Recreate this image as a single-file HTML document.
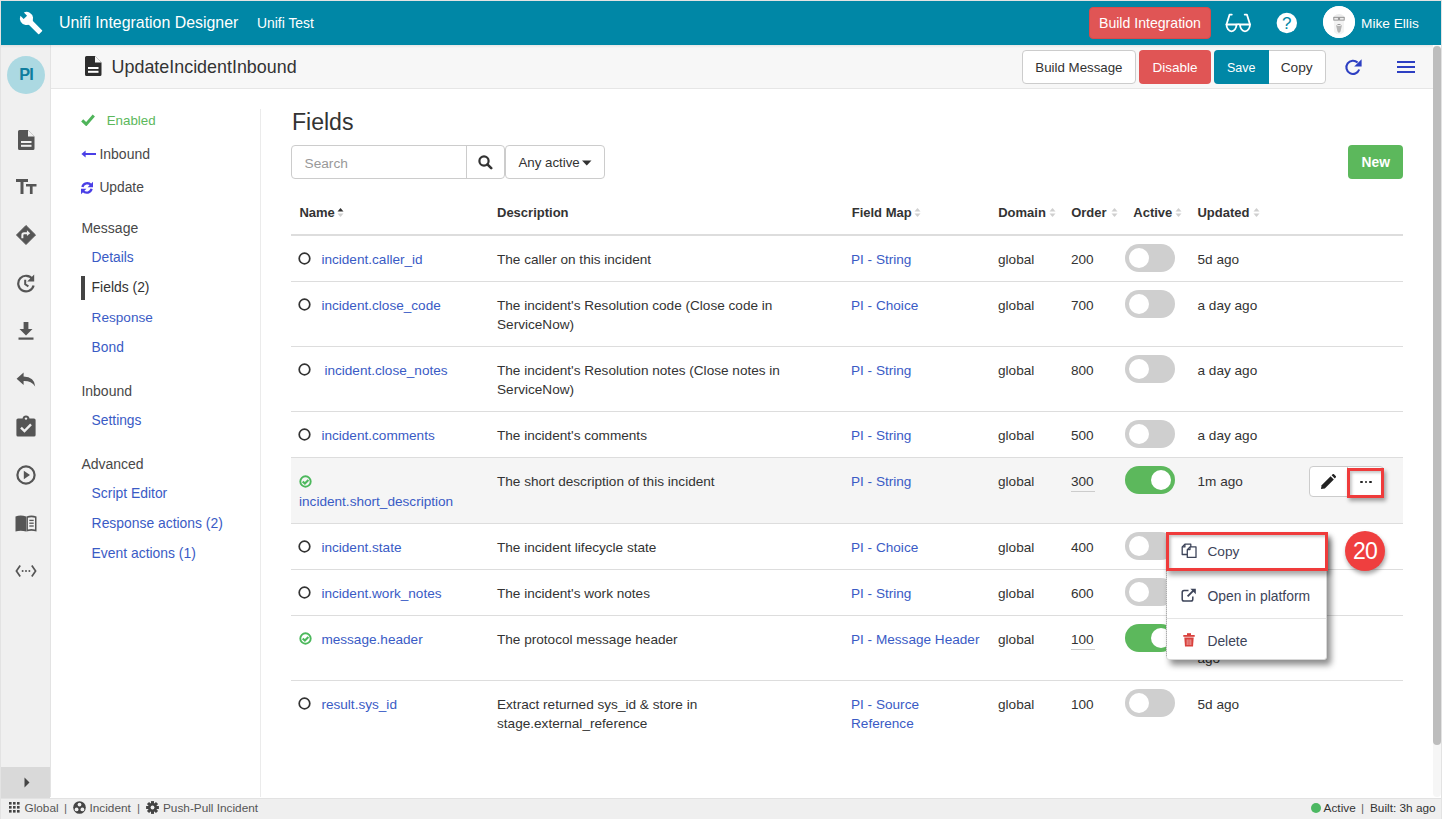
<!DOCTYPE html><html><head><meta charset="utf-8"><style>
*{box-sizing:border-box;margin:0;padding:0}
html,body{width:1442px;height:819px;overflow:hidden;background:#fff}
body{font-family:"Liberation Sans",sans-serif;color:#333;position:relative}
.abs{position:absolute}
.t{position:absolute;white-space:nowrap;line-height:1}
</style></head><body><div class="abs" style="left:0px;top:0px;width:1442px;height:45px;background:#0087a6"></div>
<div class="abs" style="left:0px;top:45px;width:51px;height:752px;background:#f0f0f0;border-right:1px solid #e3e3e3"></div>
<div class="abs" style="left:51px;top:45px;width:1382px;height:44px;background:#f7f7f7;border-bottom:1px solid #e6e6e6"></div>
<div class="abs" style="left:1px;top:45px;width:1432px;height:3px;background:linear-gradient(rgba(0,0,0,.07),rgba(0,0,0,0))"></div>
<div class="abs" style="left:260px;top:109px;width:1px;height:688px;background:#ebebeb"></div>
<div class="abs" style="left:0px;top:798px;width:1442px;height:21px;background:#efefef;border-top:1px solid #e2e2e2"></div>
<div class="abs" style="left:1px;top:767px;width:49px;height:31px;background:#d9d9d9"></div>
<div class="abs" style="left:1433px;top:45px;width:8px;height:752px;background:#f6f6f6;border-radius:4px"></div>
<div class="abs" style="left:1433px;top:46px;width:8px;height:699px;background:#bdbdbd;border-radius:4px"></div>
<div class="t " style="left:59px;top:15px;font-size:15.9px;color:#fff;font-weight:400;">Unifi Integration Designer</div>
<div class="t " style="left:257px;top:17px;font-size:13.9px;color:#fff;font-weight:400;">Unifi Test</div>
<div class="abs" style="left:1089px;top:7px;width:122px;height:32px;background:#e05555;border:1px solid #d84a4a;border-radius:4px"></div>
<div class="t " style="left:1099px;top:16px;font-size:14.1px;color:#fff;font-weight:400;">Build Integration</div>
<div class="t " style="left:1361px;top:17px;font-size:13.7px;color:#fff;font-weight:400;">Mike Ellis</div>
<div class="abs" style="left:1323px;top:6px;width:32px;height:32px;background:#fff;border-radius:50%"></div>
<div class="t " style="left:111.6px;top:59px;font-size:17.9px;color:#333;font-weight:400;">UpdateIncidentInbound</div>
<div class="abs" style="left:1022px;top:50px;width:114px;height:34px;background:#fff;border:1px solid #ccc;border-radius:4px"></div>
<div class="t " style="left:1035.3px;top:61px;font-size:13.3px;color:#333;font-weight:400;">Build Message</div>
<div class="abs" style="left:1139px;top:50px;width:72px;height:34px;background:#e05555;border-radius:4px"></div>
<div class="t " style="left:1152.5px;top:61px;font-size:13.5px;color:#fff;font-weight:400;">Disable</div>
<div class="abs" style="left:1214px;top:50px;width:112px;height:34px;background:#fff;border:1px solid #ccc;border-radius:4px"></div>
<div class="abs" style="left:1214px;top:50px;width:55px;height:34px;background:#0087a6;border-radius:4px 0 0 4px"></div>
<div class="t " style="left:1227px;top:62px;font-size:12.5px;color:#fff;font-weight:400;">Save</div>
<div class="t " style="left:1280.7px;top:61px;font-size:13.7px;color:#333;font-weight:400;">Copy</div>
<div class="abs" style="left:7px;top:56px;width:38px;height:38px;background:#acd9e2;border-radius:50%"></div>
<div class="t " style="left:19.2px;top:66px;font-size:16.3px;color:#0f7d9e;font-weight:700;letter-spacing:-0.9px">PI</div>
<div class="t " style="left:106.7px;top:114px;font-size:13.35px;color:#5cb85c;font-weight:400;">Enabled</div>
<div class="t " style="left:99.4px;top:147px;font-size:14px;color:#484848;font-weight:400;">Inbound</div>
<div class="t " style="left:99.4px;top:181px;font-size:13.8px;color:#484848;font-weight:400;">Update</div>
<div class="t " style="left:81.4px;top:221px;font-size:14px;color:#484848;font-weight:400;">Message</div>
<div class="t " style="left:91.6px;top:251px;font-size:13.8px;color:#3a5bc5;font-weight:400;">Details</div>
<div class="abs" style="left:81px;top:276px;width:4px;height:24px;background:#444"></div>
<div class="t " style="left:91.6px;top:281px;font-size:13.9px;color:#333;font-weight:400;">Fields (2)</div>
<div class="t " style="left:91.6px;top:311px;font-size:13.6px;color:#3a5bc5;font-weight:400;">Response</div>
<div class="t " style="left:91.6px;top:341px;font-size:13.8px;color:#3a5bc5;font-weight:400;">Bond</div>
<div class="t " style="left:81.4px;top:384px;font-size:14px;color:#484848;font-weight:400;">Inbound</div>
<div class="t " style="left:91.6px;top:414px;font-size:13.8px;color:#3a5bc5;font-weight:400;">Settings</div>
<div class="t " style="left:81.4px;top:457px;font-size:14px;color:#484848;font-weight:400;">Advanced</div>
<div class="t " style="left:91.6px;top:487px;font-size:13.9px;color:#3a5bc5;font-weight:400;">Script Editor</div>
<div class="t " style="left:91.6px;top:517px;font-size:13.9px;color:#3a5bc5;font-weight:400;">Response actions (2)</div>
<div class="t " style="left:91.6px;top:547px;font-size:13.9px;color:#3a5bc5;font-weight:400;">Event actions (1)</div>
<div class="t " style="left:291.9px;top:111px;font-size:23.1px;color:#333;font-weight:400;">Fields</div>
<div class="abs" style="left:291px;top:145px;width:214px;height:34px;background:#fff;border:1px solid #ccc;border-radius:4px"></div>
<div class="abs" style="left:466px;top:145px;width:1px;height:34px;background:#ccc"></div>
<div class="t " style="left:304.5px;top:157px;font-size:13.7px;color:#999;font-weight:400;">Search</div>
<div class="abs" style="left:505px;top:145px;width:100px;height:34px;background:#fff;border:1px solid #ccc;border-radius:4px"></div>
<div class="t " style="left:518.4px;top:156px;font-size:13.3px;color:#333;font-weight:400;">Any active</div>
<div class="abs" style="left:1348px;top:145px;width:55px;height:34px;background:#5cb85c;border-radius:4px"></div>
<div class="t " style="left:1361.5px;top:156px;font-size:13.8px;color:#fff;font-weight:700;">New</div>
<div class="t " style="left:299.4px;top:206px;font-size:13px;color:#333;font-weight:700;">Name</div>
<div class="t " style="left:497px;top:206px;font-size:13px;color:#333;font-weight:700;">Description</div>
<div class="t " style="left:851.7px;top:206px;font-size:13px;color:#333;font-weight:700;">Field Map</div>
<div class="t " style="left:998.2px;top:206px;font-size:13px;color:#333;font-weight:700;">Domain</div>
<div class="t " style="left:1071.2px;top:206px;font-size:13px;color:#333;font-weight:700;">Order</div>
<div class="t " style="left:1133.3px;top:206px;font-size:13px;color:#333;font-weight:700;">Active</div>
<div class="t " style="left:1197.4px;top:206px;font-size:13px;color:#333;font-weight:700;">Updated</div>
<svg class="abs" style="left:337px;top:207px;" width="7" height="11" viewBox="0 0 7 11"><path d="M0.5 4.5 L3.5 1 L6.5 4.5Z" fill="#333"/><path d="M0.5 6.5 L3.5 10 L6.5 6.5Z" fill="#cfcfcf"/></svg>
<svg class="abs" style="left:914px;top:207px;" width="7" height="11" viewBox="0 0 7 11"><path d="M0.5 4.5 L3.5 1 L6.5 4.5Z" fill="#cfcfcf"/><path d="M0.5 6.5 L3.5 10 L6.5 6.5Z" fill="#cfcfcf"/></svg>
<svg class="abs" style="left:1049px;top:207px;" width="7" height="11" viewBox="0 0 7 11"><path d="M0.5 4.5 L3.5 1 L6.5 4.5Z" fill="#cfcfcf"/><path d="M0.5 6.5 L3.5 10 L6.5 6.5Z" fill="#cfcfcf"/></svg>
<svg class="abs" style="left:1111px;top:207px;" width="7" height="11" viewBox="0 0 7 11"><path d="M0.5 4.5 L3.5 1 L6.5 4.5Z" fill="#cfcfcf"/><path d="M0.5 6.5 L3.5 10 L6.5 6.5Z" fill="#cfcfcf"/></svg>
<svg class="abs" style="left:1175px;top:207px;" width="7" height="11" viewBox="0 0 7 11"><path d="M0.5 4.5 L3.5 1 L6.5 4.5Z" fill="#cfcfcf"/><path d="M0.5 6.5 L3.5 10 L6.5 6.5Z" fill="#cfcfcf"/></svg>
<svg class="abs" style="left:1253px;top:207px;" width="7" height="11" viewBox="0 0 7 11"><path d="M0.5 4.5 L3.5 1 L6.5 4.5Z" fill="#cfcfcf"/><path d="M0.5 6.5 L3.5 10 L6.5 6.5Z" fill="#cfcfcf"/></svg>
<div class="abs" style="left:291px;top:234px;width:1112px;height:2px;background:#ddd"></div>
<div class="abs" style="left:291px;top:281px;width:1112px;height:1px;background:#ddd"></div>
<div class="abs" style="left:291px;top:346px;width:1112px;height:1px;background:#ddd"></div>
<div class="abs" style="left:291px;top:411px;width:1112px;height:1px;background:#ddd"></div>
<div class="abs" style="left:291px;top:457px;width:1112px;height:1px;background:#ddd"></div>
<div class="abs" style="left:291px;top:523px;width:1112px;height:1px;background:#ddd"></div>
<div class="abs" style="left:291px;top:569px;width:1112px;height:1px;background:#ddd"></div>
<div class="abs" style="left:291px;top:615px;width:1112px;height:1px;background:#ddd"></div>
<div class="abs" style="left:291px;top:680px;width:1112px;height:1px;background:#ddd"></div>
<div class="abs" style="left:291px;top:458px;width:1112px;height:65px;background:#f5f5f5"></div>
<svg class="abs" style="left:298px;top:251.5px;" width="13" height="13" viewBox="0 0 13 13"><circle cx="6.5" cy="6.5" r="5.3" fill="none" stroke="#333" stroke-width="1.7"/></svg>
<div class="t " style="left:321.4px;top:253px;font-size:13.6px;color:#3a5bc5;font-weight:400;">incident.caller_id</div>
<div class="t " style="left:497px;top:253px;font-size:13.6px;color:#333;font-weight:400;">The caller on this incident</div>
<div class="t " style="left:851px;top:253px;font-size:13.6px;color:#3a5bc5;font-weight:400;">PI - String</div>
<div class="t " style="left:998px;top:253px;font-size:13.6px;color:#333;font-weight:400;">global</div>
<div class="t " style="left:1071px;top:253px;font-size:13.6px;color:#333;font-weight:400;">200</div>
<div class="abs" style="left:1125px;top:244px;width:50px;height:28px;background:#cfcfcf;border-radius:14px"></div>
<div class="abs" style="left:1129px;top:248px;width:20px;height:20px;background:#fff;border-radius:50%"></div>
<div class="t " style="left:1197.5px;top:253px;font-size:13.6px;color:#333;font-weight:400;">5d ago</div>
<svg class="abs" style="left:298px;top:297.5px;" width="13" height="13" viewBox="0 0 13 13"><circle cx="6.5" cy="6.5" r="5.3" fill="none" stroke="#333" stroke-width="1.7"/></svg>
<div class="t " style="left:321.4px;top:299px;font-size:13.6px;color:#3a5bc5;font-weight:400;">incident.close_code</div>
<div class="t " style="left:497px;top:299px;font-size:13.6px;color:#333;font-weight:400;">The incident's Resolution code (Close code in</div>
<div class="t " style="left:497px;top:318px;font-size:13.6px;color:#333;font-weight:400;">ServiceNow)</div>
<div class="t " style="left:851px;top:299px;font-size:13.6px;color:#3a5bc5;font-weight:400;">PI - Choice</div>
<div class="t " style="left:998px;top:299px;font-size:13.6px;color:#333;font-weight:400;">global</div>
<div class="t " style="left:1071px;top:299px;font-size:13.6px;color:#333;font-weight:400;">700</div>
<div class="abs" style="left:1125px;top:290px;width:50px;height:28px;background:#cfcfcf;border-radius:14px"></div>
<div class="abs" style="left:1129px;top:294px;width:20px;height:20px;background:#fff;border-radius:50%"></div>
<div class="t " style="left:1197.5px;top:299px;font-size:13.6px;color:#333;font-weight:400;">a day ago</div>
<svg class="abs" style="left:298px;top:362.5px;" width="13" height="13" viewBox="0 0 13 13"><circle cx="6.5" cy="6.5" r="5.3" fill="none" stroke="#333" stroke-width="1.7"/></svg>
<div class="t " style="left:321.4px;top:364px;font-size:13.6px;color:#3a5bc5;font-weight:400;margin-left:3px">incident.close_notes</div>
<div class="t " style="left:497px;top:364px;font-size:13.6px;color:#333;font-weight:400;">The incident's Resolution notes (Close notes in</div>
<div class="t " style="left:497px;top:383px;font-size:13.6px;color:#333;font-weight:400;">ServiceNow)</div>
<div class="t " style="left:851px;top:364px;font-size:13.6px;color:#3a5bc5;font-weight:400;">PI - String</div>
<div class="t " style="left:998px;top:364px;font-size:13.6px;color:#333;font-weight:400;">global</div>
<div class="t " style="left:1071px;top:364px;font-size:13.6px;color:#333;font-weight:400;">800</div>
<div class="abs" style="left:1125px;top:355px;width:50px;height:28px;background:#cfcfcf;border-radius:14px"></div>
<div class="abs" style="left:1129px;top:359px;width:20px;height:20px;background:#fff;border-radius:50%"></div>
<div class="t " style="left:1197.5px;top:364px;font-size:13.6px;color:#333;font-weight:400;">a day ago</div>
<svg class="abs" style="left:298px;top:427.5px;" width="13" height="13" viewBox="0 0 13 13"><circle cx="6.5" cy="6.5" r="5.3" fill="none" stroke="#333" stroke-width="1.7"/></svg>
<div class="t " style="left:321.4px;top:429px;font-size:13.6px;color:#3a5bc5;font-weight:400;">incident.comments</div>
<div class="t " style="left:497px;top:429px;font-size:13.6px;color:#333;font-weight:400;">The incident's comments</div>
<div class="t " style="left:851px;top:429px;font-size:13.6px;color:#3a5bc5;font-weight:400;">PI - String</div>
<div class="t " style="left:998px;top:429px;font-size:13.6px;color:#333;font-weight:400;">global</div>
<div class="t " style="left:1071px;top:429px;font-size:13.6px;color:#333;font-weight:400;">500</div>
<div class="abs" style="left:1125px;top:420px;width:50px;height:28px;background:#cfcfcf;border-radius:14px"></div>
<div class="abs" style="left:1129px;top:424px;width:20px;height:20px;background:#fff;border-radius:50%"></div>
<div class="t " style="left:1197.5px;top:429px;font-size:13.6px;color:#333;font-weight:400;">a day ago</div>
<svg class="abs" style="left:299px;top:474.5px;" width="13" height="13" viewBox="0 0 13 13"><circle cx="6.5" cy="6.5" r="5.2" fill="none" stroke="#4cb85c" stroke-width="1.9"/><path d="M3.7 6.4 L5.9 8.6 L9.4 5" fill="none" stroke="#4cb85c" stroke-width="2.1"/></svg>
<div class="t " style="left:299px;top:495px;font-size:13.6px;color:#3a5bc5;font-weight:400;">incident.short_description</div>
<div class="t " style="left:497px;top:475px;font-size:13.6px;color:#333;font-weight:400;">The short description of this incident</div>
<div class="t " style="left:851px;top:475px;font-size:13.6px;color:#3a5bc5;font-weight:400;">PI - String</div>
<div class="t " style="left:998px;top:475px;font-size:13.6px;color:#333;font-weight:400;">global</div>
<div class="t " style="left:1071px;top:475px;font-size:13.6px;color:#333;font-weight:400;">300</div>
<div class="abs" style="left:1071px;top:491px;width:24px;height:1px;background:#ccc"></div>
<div class="abs" style="left:1125px;top:466px;width:50px;height:28px;background:#5cb85c;border-radius:14px"></div>
<div class="abs" style="left:1151px;top:470px;width:20px;height:20px;background:#fff;border-radius:50%"></div>
<div class="t " style="left:1197.5px;top:475px;font-size:13.6px;color:#333;font-weight:400;">1m ago</div>
<svg class="abs" style="left:298px;top:539.5px;" width="13" height="13" viewBox="0 0 13 13"><circle cx="6.5" cy="6.5" r="5.3" fill="none" stroke="#333" stroke-width="1.7"/></svg>
<div class="t " style="left:321.4px;top:541px;font-size:13.6px;color:#3a5bc5;font-weight:400;">incident.state</div>
<div class="t " style="left:497px;top:541px;font-size:13.6px;color:#333;font-weight:400;">The incident lifecycle state</div>
<div class="t " style="left:851px;top:541px;font-size:13.6px;color:#3a5bc5;font-weight:400;">PI - Choice</div>
<div class="t " style="left:998px;top:541px;font-size:13.6px;color:#333;font-weight:400;">global</div>
<div class="t " style="left:1071px;top:541px;font-size:13.6px;color:#333;font-weight:400;">400</div>
<div class="abs" style="left:1125px;top:532px;width:50px;height:28px;background:#cfcfcf;border-radius:14px"></div>
<div class="abs" style="left:1129px;top:536px;width:20px;height:20px;background:#fff;border-radius:50%"></div>
<svg class="abs" style="left:298px;top:585.5px;" width="13" height="13" viewBox="0 0 13 13"><circle cx="6.5" cy="6.5" r="5.3" fill="none" stroke="#333" stroke-width="1.7"/></svg>
<div class="t " style="left:321.4px;top:587px;font-size:13.6px;color:#3a5bc5;font-weight:400;">incident.work_notes</div>
<div class="t " style="left:497px;top:587px;font-size:13.6px;color:#333;font-weight:400;">The incident's work notes</div>
<div class="t " style="left:851px;top:587px;font-size:13.6px;color:#3a5bc5;font-weight:400;">PI - String</div>
<div class="t " style="left:998px;top:587px;font-size:13.6px;color:#333;font-weight:400;">global</div>
<div class="t " style="left:1071px;top:587px;font-size:13.6px;color:#333;font-weight:400;">600</div>
<div class="abs" style="left:1125px;top:578px;width:50px;height:28px;background:#cfcfcf;border-radius:14px"></div>
<div class="abs" style="left:1129px;top:582px;width:20px;height:20px;background:#fff;border-radius:50%"></div>
<svg class="abs" style="left:299px;top:631.5px;" width="13" height="13" viewBox="0 0 13 13"><circle cx="6.5" cy="6.5" r="5.2" fill="none" stroke="#4cb85c" stroke-width="1.9"/><path d="M3.7 6.4 L5.9 8.6 L9.4 5" fill="none" stroke="#4cb85c" stroke-width="2.1"/></svg>
<div class="t " style="left:321.4px;top:633px;font-size:13.6px;color:#3a5bc5;font-weight:400;">message.header</div>
<div class="t " style="left:497px;top:633px;font-size:13.6px;color:#333;font-weight:400;">The protocol message header</div>
<div class="t " style="left:851px;top:633px;font-size:13.6px;color:#3a5bc5;font-weight:400;">PI - Message Header</div>
<div class="t " style="left:998px;top:633px;font-size:13.6px;color:#333;font-weight:400;">global</div>
<div class="t " style="left:1071px;top:633px;font-size:13.6px;color:#333;font-weight:400;">100</div>
<div class="abs" style="left:1071px;top:649px;width:24px;height:1px;background:#ccc"></div>
<div class="abs" style="left:1125px;top:624px;width:50px;height:28px;background:#5cb85c;border-radius:14px"></div>
<div class="abs" style="left:1151px;top:628px;width:20px;height:20px;background:#fff;border-radius:50%"></div>
<div class="t " style="left:1197.5px;top:633px;font-size:13.6px;color:#333;font-weight:400;">a day</div>
<div class="t " style="left:1197.5px;top:652px;font-size:13.6px;color:#333;font-weight:400;">ago</div>
<svg class="abs" style="left:298px;top:696.5px;" width="13" height="13" viewBox="0 0 13 13"><circle cx="6.5" cy="6.5" r="5.3" fill="none" stroke="#333" stroke-width="1.7"/></svg>
<div class="t " style="left:321.4px;top:698px;font-size:13.6px;color:#3a5bc5;font-weight:400;">result.sys_id</div>
<div class="t " style="left:497px;top:698px;font-size:13.6px;color:#333;font-weight:400;">Extract returned sys_id &amp; store in</div>
<div class="t " style="left:497px;top:717px;font-size:13.6px;color:#333;font-weight:400;">stage.external_reference</div>
<div class="t " style="left:851px;top:698px;font-size:13.6px;color:#3a5bc5;font-weight:400;">PI - Source</div>
<div class="t " style="left:851px;top:717px;font-size:13.6px;color:#3a5bc5;font-weight:400;">Reference</div>
<div class="t " style="left:998px;top:698px;font-size:13.6px;color:#333;font-weight:400;">global</div>
<div class="t " style="left:1071px;top:698px;font-size:13.6px;color:#333;font-weight:400;">100</div>
<div class="abs" style="left:1125px;top:689px;width:50px;height:28px;background:#cfcfcf;border-radius:14px"></div>
<div class="abs" style="left:1129px;top:693px;width:20px;height:20px;background:#fff;border-radius:50%"></div>
<div class="t " style="left:1197.5px;top:698px;font-size:13.6px;color:#333;font-weight:400;">5d ago</div>
<svg class="abs" style="left:12px;top:6px;" width="38" height="34" viewBox="0 0 38 34"><g transform="translate(14.5 12.5) rotate(-45)" fill="#fff"><path d="M-2.4 -6.15 A6.6 6.6 0 1 0 2.4 -6.15 L2.4 -1.6 L-2.4 -1.6Z"/><rect x="-2.75" y="2" width="5.5" height="18" rx="0.8"/></g></svg>
<svg class="abs" style="left:1225px;top:12px;" width="27" height="22" viewBox="0 0 27 22"><g fill="none" stroke="#fff" stroke-width="1.8" stroke-linejoin="round" stroke-linecap="round"><path d="M1.5 12.5 H11.5 A5 6.8 0 0 1 1.5 12.5Z"/><path d="M15 12.5 H25 A5 6.8 0 0 1 15 12.5Z"/><path d="M11.5 12.8 Q13.25 11.6 15 12.8"/><path d="M1.5 12.5 L4.6 2.6 H6.8"/><path d="M25 12.5 L21.9 2.6 H19.7"/></g></svg>
<svg class="abs" style="left:1276px;top:12px;" width="22" height="22" viewBox="0 0 22 22"><circle cx="10.8" cy="11" r="10.2" fill="#fff"/><text x="10.8" y="17" text-anchor="middle" font-family="Liberation Sans" font-size="17" fill="#0087a6">?</text></svg>
<svg class="abs" style="left:1323px;top:6px;" width="32" height="32" viewBox="0 0 32 32"><circle cx="16" cy="16" r="15.8" fill="#fff"/><path d="M11 10 Q16 6 21 10 L21.5 13 L10.5 13Z" fill="#ececec"/><path d="M11 13 V26 Q16 31 21 26 V13Z" fill="#f3f3f3"/><rect x="10.8" y="11.3" width="4.6" height="2.8" fill="none" stroke="#8a8a8a" stroke-width="0.9"/><rect x="16.6" y="11.3" width="4.6" height="2.8" fill="none" stroke="#8a8a8a" stroke-width="0.9"/><path d="M13 19 Q16 21 19 19 L17.5 25.5 L16 27 L14.5 25.5Z" fill="#b5b5b5"/><path d="M14.5 18.5 H17.5" stroke="#9a9a9a" stroke-width="1"/></svg>
<svg class="abs" style="left:85px;top:56px;" width="17" height="20" viewBox="0 0 17 20"><path d="M1.5 0 H10 L16.5 6.5 V18.5 A1.5 1.5 0 0 1 15 20 H1.5 A1.5 1.5 0 0 1 0 18.5 V1.5 A1.5 1.5 0 0 1 1.5 0Z" fill="#2d2d2d"/><path d="M10 0 V6.5 H16.5Z" fill="#f7f7f7"/><rect x="3" y="11" width="10.5" height="2" fill="#fff"/><rect x="3" y="14.8" width="10.5" height="2" fill="#fff"/></svg>
<svg class="abs" style="left:1344px;top:58px;" width="19" height="19" viewBox="0 0 19 19"><path d="M15.2 11.5 A6.6 6.6 0 1 1 13.6 4.6" fill="none" stroke="#2d3fc2" stroke-width="2.1"/><path d="M17.6 1.2 V8.6 H10.2Z" fill="#2d3fc2"/></svg>
<div class="abs" style="left:1397px;top:61px;width:18px;height:2.2px;background:#2d3fc2"></div>
<div class="abs" style="left:1397px;top:66px;width:18px;height:2.2px;background:#2d3fc2"></div>
<div class="abs" style="left:1397px;top:71px;width:18px;height:2.2px;background:#2d3fc2"></div>
<svg class="abs" style="left:18px;top:129.5px;" width="17" height="20" viewBox="0 0 17 20"><path d="M1.5 0 H10 L16.5 6.5 V18.5 A1.5 1.5 0 0 1 15 20 H1.5 A1.5 1.5 0 0 1 0 18.5 V1.5 A1.5 1.5 0 0 1 1.5 0Z" fill="#555"/><path d="M10 0 V6.5 H16.5Z" fill="#f0f0f0"/><rect x="3" y="11" width="10.5" height="2" fill="#f0f0f0"/><rect x="3" y="14.8" width="10.5" height="2" fill="#f0f0f0"/></svg>
<svg class="abs" style="left:16px;top:179px;" width="21" height="15" viewBox="0 0 21 15"><path d="M0 0 H12 V3 H7.5 V15 H4.5 V3 H0Z" fill="#555"/><path d="M10 5 H20.5 V7.6 H16.6 V15 H13.9 V7.6 H10Z" fill="#555"/></svg>
<svg class="abs" style="left:16px;top:225px;" width="20" height="20" viewBox="0 0 20 20"><g transform="scale(0.909)"><path d="M11 0.5 L21.5 11 L11 21.5 L0.5 11Z" fill="#555" stroke="#555" stroke-width="1" stroke-linejoin="round"/><path d="M7 14.5 V11 Q7 9 9 9 H12.5" fill="none" stroke="#f0f0f0" stroke-width="2.2"/><path d="M12 5.8 L15.6 9 L12 12.2Z" fill="#f0f0f0"/></g></svg>
<svg class="abs" style="left:16px;top:274px;" width="20" height="19" viewBox="0 0 20 19"><path d="M16.5 5.2 A7.8 7.8 0 1 0 17.6 11.5" fill="none" stroke="#555" stroke-width="2.2"/><path d="M18.2 0.6 V7.6 H11.2Z" fill="#555"/><path d="M9.2 5.8 V10.3 L12.4 12.4" fill="none" stroke="#555" stroke-width="2"/></svg>
<svg class="abs" style="left:17px;top:322px;" width="18" height="18" viewBox="0 0 18 18"><path d="M6.6 0 H11.4 V7 H15.5 L9 13.6 L2.5 7 H6.6Z" fill="#555"/><rect x="1.5" y="15.5" width="15" height="2.2" fill="#555"/></svg>
<svg class="abs" style="left:16px;top:372px;" width="20" height="15" viewBox="0 0 20 15"><path d="M7.6 0.6 L0.6 6.8 L7.6 13 V9 Q15 8.6 19.2 14.4 Q18.6 5.2 7.6 4.6Z" fill="#555"/></svg>
<svg class="abs" style="left:16px;top:415px;" width="20" height="22" viewBox="0 0 20 22"><path d="M2 3.5 H6.5 Q7 0.5 10 0.5 Q13 0.5 13.5 3.5 H18 A1.6 1.6 0 0 1 19.6 5.1 V19.9 A1.6 1.6 0 0 1 18 21.5 H2 A1.6 1.6 0 0 1 0.4 19.9 V5.1 A1.6 1.6 0 0 1 2 3.5Z" fill="#555"/><circle cx="10" cy="3.6" r="1.2" fill="#f0f0f0"/><path d="M5 12.6 L8.5 16 L15 9.4" fill="none" stroke="#f0f0f0" stroke-width="2.4"/></svg>
<svg class="abs" style="left:16px;top:465px;" width="20" height="20" viewBox="0 0 20 20"><circle cx="10" cy="10" r="8.6" fill="none" stroke="#555" stroke-width="2.2"/><path d="M7.8 5.8 L14 10 L7.8 14.2Z" fill="#555"/></svg>
<svg class="abs" style="left:15px;top:515px;" width="22" height="17" viewBox="0 0 22 17"><path d="M0.5 1.4 Q5.5 -0.4 11.2 1.4 V16.4 Q5.5 15 0.5 16.4Z" fill="#555"/><path d="M11.4 1.4 Q16.5 -0.4 21.5 1.4 V16.4 Q16.5 15 11.4 16.4Z" fill="#555"/><path d="M12.9 2.8 Q16.5 1.6 20 2.8 V14.5 Q16.5 13.6 12.9 14.5Z" fill="#f0f0f0"/><g stroke="#555" stroke-width="1.3"><path d="M14.3 5.4 H18.7"/><path d="M14.3 8.2 H18.7"/><path d="M14.3 11 H18.7"/></g></svg>
<svg class="abs" style="left:15px;top:564px;" width="22" height="14" viewBox="0 0 22 14"><path d="M5.2 1.5 L1.4 7 L5.2 12.5" fill="none" stroke="#555" stroke-width="1.7"/><path d="M16.8 1.5 L20.6 7 L16.8 12.5" fill="none" stroke="#555" stroke-width="1.7"/><circle cx="7.6" cy="7" r="1" fill="#555"/><circle cx="11" cy="7" r="1" fill="#555"/><circle cx="14.4" cy="7" r="1" fill="#555"/></svg>
<svg class="abs" style="left:23px;top:777px;" width="8" height="11" viewBox="0 0 8 11"><path d="M1.5 0.5 L6.5 5.5 L1.5 10.5Z" fill="#444"/></svg>
<svg class="abs" style="left:81px;top:114px;" width="14" height="12" viewBox="0 0 14 12"><path d="M1.2 6.4 L5.2 10.2 L12.8 1.6" fill="none" stroke="#4fb45a" stroke-width="3"/></svg>
<svg class="abs" style="left:81px;top:150px;" width="15" height="8" viewBox="0 0 15 8"><path d="M15 4 H3" stroke="#4a3fe6" stroke-width="2"/><path d="M4.6 0.4 L0.4 4 L4.6 7.6Z" fill="#4a3fe6"/></svg>
<svg class="abs" style="left:80px;top:181px;" width="14" height="14" viewBox="0 0 14 14"><path d="M2.4 6 A5 5 0 0 1 11 4" fill="none" stroke="#4a3fe6" stroke-width="2.3"/><path d="M11.6 7.8 A5 5 0 0 1 3 10" fill="none" stroke="#4a3fe6" stroke-width="2.3"/><path d="M13 0.8 V6.2 H7.6Z" fill="#4a3fe6"/><path d="M1 13.2 V7.8 H6.4Z" fill="#4a3fe6"/></svg>
<svg class="abs" style="left:478px;top:155px;" width="15" height="15" viewBox="0 0 15 15"><circle cx="6" cy="6" r="4.6" fill="none" stroke="#333" stroke-width="2.2"/><path d="M9.4 9.4 L13.2 13.2" stroke="#333" stroke-width="2.6" stroke-linecap="round"/></svg>
<svg class="abs" style="left:582px;top:160px;" width="10" height="6" viewBox="0 0 10 6"><path d="M0 0.5 H9.5 L4.75 5.5Z" fill="#333"/></svg>
<div class="abs" style="left:1309px;top:466px;width:75px;height:31px;background:#fff;border:1px solid #ccc;border-radius:4px"></div>
<div class="abs" style="left:1347px;top:466px;width:1px;height:31px;background:#ccc"></div>
<svg class="abs" style="left:1320px;top:474px;" width="16" height="16" viewBox="0 0 16 16"><path d="M1 15 L1.6 11.2 L10.6 2.2 L13.8 5.4 L4.8 14.4Z" fill="#222"/><path d="M11.6 1.2 L12.6 0.3 A1 1 0 0 1 14 0.3 L15.7 2 A1 1 0 0 1 15.7 3.4 L14.8 4.4Z" fill="#222"/></svg>
<div class="abs" style="left:1360px;top:480.5px;width:2.6px;height:2.6px;background:#222;border-radius:50%"></div>
<div class="abs" style="left:1364.7px;top:480.5px;width:2.6px;height:2.6px;background:#222;border-radius:50%"></div>
<div class="abs" style="left:1369.4px;top:480.5px;width:2.6px;height:2.6px;background:#222;border-radius:50%"></div>
<div class="abs" style="left:1347px;top:468px;width:37px;height:30px;border:3px solid #ef3b3b;box-shadow:2px 3px 4px rgba(0,0,0,.35), inset 2px 2px 3px rgba(0,0,0,.22)"></div>
<div class="abs" style="left:1166px;top:533px;width:161px;height:127px;background:#fff;border:1px solid #d8d8d8;border-radius:3px;box-shadow:4px 5px 6px rgba(0,0,0,.45)"></div>
<div class="abs" style="left:1167px;top:618px;width:159px;height:1px;background:#e5e5e5"></div>
<div class="abs" style="left:1166px;top:536px;width:1px;height:120px;border-left:1px dotted rgba(40,40,40,.25)"></div>
<div class="abs" style="left:1166px;top:532px;width:162px;height:39px;border:3px solid #ef3b3b;box-shadow:2px 4px 5px rgba(0,0,0,.35), inset 2px 2px 3px rgba(0,0,0,.22)"></div>
<svg class="abs" style="left:1181px;top:543px;" width="16" height="16" viewBox="0 0 16 16"><g stroke="#3d4459" stroke-width="1.3" stroke-linejoin="round"><path d="M1.2 3.9 L3.9 1.2 H9.8 V11.5 H1.2Z" fill="#fff"/><path d="M1.2 3.9 H3.9 V1.2" fill="none"/><path d="M6.3 6.6 L9 3.9 H15 V14.4 H6.3Z" fill="#fff"/><path d="M6.3 6.6 H9 V3.9" fill="none"/></g></svg>
<div class="t " style="left:1207.4px;top:545px;font-size:13.7px;color:#3d4459;font-weight:400;">Copy</div>
<svg class="abs" style="left:1181px;top:588px;" width="16" height="14" viewBox="0 0 16 14"><path d="M7.5 2.6 H3 A1.8 1.8 0 0 0 1.2 4.4 V11.2 A1.8 1.8 0 0 0 3 13 H10 A1.8 1.8 0 0 0 11.8 11.2 V8.6" fill="none" stroke="#3d4459" stroke-width="1.5"/><path d="M6.6 8.4 L12.6 2.4" stroke="#3d4459" stroke-width="1.9"/><path d="M9.4 0.8 H14.8 V6.2Z" fill="#3d4459"/></svg>
<div class="t " style="left:1207.4px;top:590px;font-size:13.9px;color:#3d4459;font-weight:400;">Open in platform</div>
<svg class="abs" style="left:1183px;top:633px;" width="12" height="14" viewBox="0 0 12 14"><rect x="0.3" y="2" width="11.4" height="1.8" fill="#d9413d"/><rect x="4" y="0.2" width="4" height="2" fill="#d9413d"/><path d="M1.3 4.6 H10.7 L10 13.6 H2Z" fill="#d9413d"/><g stroke="#f4c9c8" stroke-width="0.7"><path d="M4.2 6.4 V12"/><path d="M6 6.4 V12"/><path d="M7.8 6.4 V12"/></g></svg>
<div class="t " style="left:1207.4px;top:635px;font-size:13.85px;color:#3d4459;font-weight:400;">Delete</div>
<div class="abs" style="left:1345px;top:531px;width:40px;height:40px;background:#ef3f3f;border-radius:50%;box-shadow:1px 3px 4px rgba(0,0,0,.35)"></div>
<div class="t " style="left:1353px;top:540px;font-size:23px;color:#fff;font-weight:400;letter-spacing:-0.8px">20</div>
<svg class="abs" style="left:9px;top:802px;" width="11" height="11" viewBox="0 0 11 11"><rect x="0" y="0" width="2.6" height="2.6" fill="#444"/><rect x="0" y="4" width="2.6" height="2.6" fill="#444"/><rect x="0" y="8" width="2.6" height="2.6" fill="#444"/><rect x="4" y="0" width="2.6" height="2.6" fill="#444"/><rect x="4" y="4" width="2.6" height="2.6" fill="#444"/><rect x="4" y="8" width="2.6" height="2.6" fill="#444"/><rect x="8" y="0" width="2.6" height="2.6" fill="#444"/><rect x="8" y="4" width="2.6" height="2.6" fill="#444"/><rect x="8" y="8" width="2.6" height="2.6" fill="#444"/></svg>
<div class="t " style="left:24.5px;top:803px;font-size:11.8px;color:#555;font-weight:400;">Global</div>
<div class="t " style="left:64px;top:803px;font-size:11.8px;color:#666;font-weight:400;">|</div>
<svg class="abs" style="left:73px;top:801px;" width="13" height="13" viewBox="0 0 13 13"><circle cx="6.5" cy="6.5" r="6.3" fill="#444"/><circle cx="6.5" cy="3.6" r="1.9" fill="#efefef"/><circle cx="3.6" cy="8.4" r="1.9" fill="#efefef"/><circle cx="9.4" cy="8.4" r="1.9" fill="#efefef"/></svg>
<div class="t " style="left:89.5px;top:803px;font-size:11.8px;color:#555;font-weight:400;">Incident</div>
<div class="t " style="left:137px;top:803px;font-size:11.8px;color:#666;font-weight:400;">|</div>
<svg class="abs" style="left:146px;top:801px;" width="13" height="13" viewBox="0 0 13 13"><g transform="translate(6.5 6.5)"><circle r="4.4" fill="#444"/><rect x="-1.5" y="-6.4" width="3" height="3.4" fill="#444" transform="rotate(0)"/><rect x="-1.5" y="-6.4" width="3" height="3.4" fill="#444" transform="rotate(45)"/><rect x="-1.5" y="-6.4" width="3" height="3.4" fill="#444" transform="rotate(90)"/><rect x="-1.5" y="-6.4" width="3" height="3.4" fill="#444" transform="rotate(135)"/><rect x="-1.5" y="-6.4" width="3" height="3.4" fill="#444" transform="rotate(180)"/><rect x="-1.5" y="-6.4" width="3" height="3.4" fill="#444" transform="rotate(225)"/><rect x="-1.5" y="-6.4" width="3" height="3.4" fill="#444" transform="rotate(270)"/><rect x="-1.5" y="-6.4" width="3" height="3.4" fill="#444" transform="rotate(315)"/><circle r="1.9" fill="#efefef"/></g></svg>
<div class="t " style="left:163px;top:803px;font-size:11.8px;color:#555;font-weight:400;">Push-Pull Incident</div>
<div class="abs" style="left:1311px;top:802.5px;width:10px;height:10px;background:#4cb862;border-radius:50%"></div>
<div class="t " style="left:1323.6px;top:803px;font-size:11.8px;color:#333;font-weight:400;">Active</div>
<div class="t " style="left:1361px;top:803px;font-size:11.8px;color:#666;font-weight:400;">|</div>
<div class="t " style="left:1370px;top:803px;font-size:11.8px;color:#333;font-weight:400;">Built: 3h ago</div>
<div class="abs" style="left:0px;top:0px;width:1442px;height:819px;border:1px solid #e3e3e3;border-bottom:none;z-index:60;pointer-events:none"></div></body></html>
